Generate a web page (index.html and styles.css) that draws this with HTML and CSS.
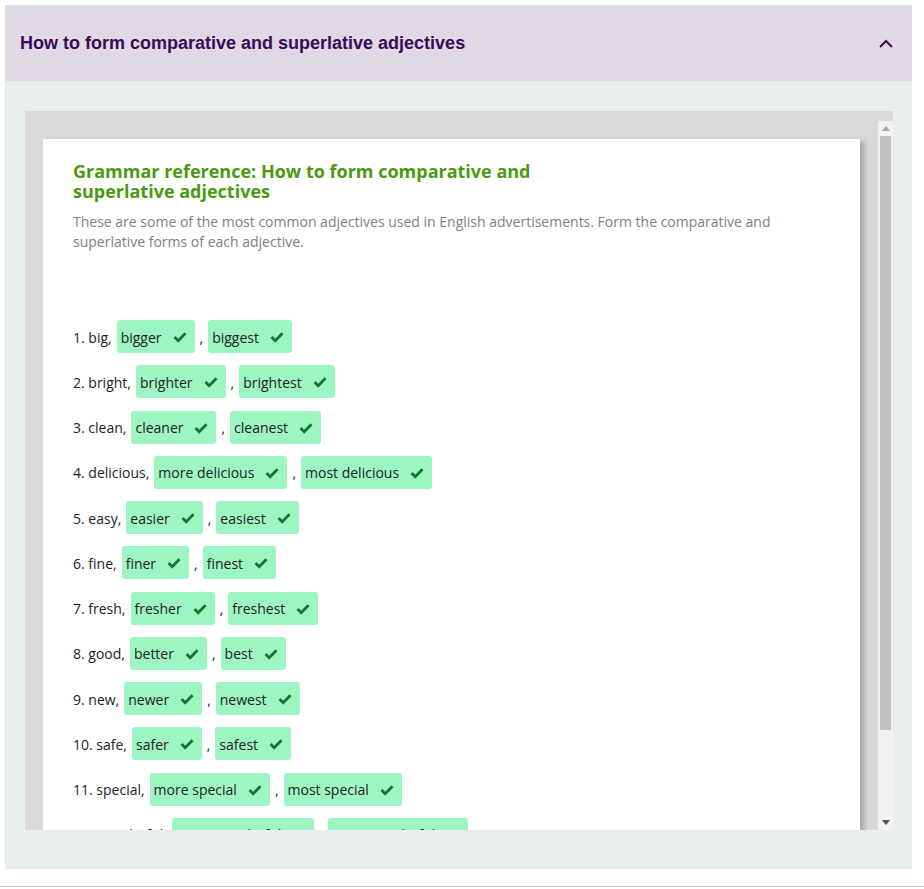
FILE: index.html
```html
<!DOCTYPE html>
<html lang="en">
<head>
<meta charset="utf-8">
<title>How to form comparative and superlative adjectives</title>
<link rel="stylesheet" href="styles.css">
</head>
<body>
<div class="page">
  <section class="accordion">
    <div class="acc-header">
      <h2 class="acc-title">How to form comparative and superlative adjectives</h2>
      <svg class="chevron" width="14" height="9" viewBox="0 0 14 9"><path d="M1 8 L7 2 L13 8" fill="none" stroke="#3b0a57" stroke-width="2"/></svg>
    </div>
    <div class="acc-body">
      <div class="frame">
        <div class="viewport">
          <div class="scroller">
            <div class="card">
              <h3 class="card-title">Grammar reference: How to form comparative and superlative adjectives</h3>
              <p class="desc">These are some of the most common adjectives used in English advertisements. Form the comparative and superlative forms of each adjective.</p>
              <div class="list">
                <div class="row"><span>1. big,</span><span class="chip">bigger<svg class="ck" viewBox="0 0 14 12"><path d="M1.5 6 L5.2 9.7 L12.5 2.2"/></svg></span><span>,</span><span class="chip">biggest<svg class="ck" viewBox="0 0 14 12"><path d="M1.5 6 L5.2 9.7 L12.5 2.2"/></svg></span></div>
                <div class="row"><span>2. bright,</span><span class="chip">brighter<svg class="ck" viewBox="0 0 14 12"><path d="M1.5 6 L5.2 9.7 L12.5 2.2"/></svg></span><span>,</span><span class="chip">brightest<svg class="ck" viewBox="0 0 14 12"><path d="M1.5 6 L5.2 9.7 L12.5 2.2"/></svg></span></div>
                <div class="row"><span>3. clean,</span><span class="chip">cleaner<svg class="ck" viewBox="0 0 14 12"><path d="M1.5 6 L5.2 9.7 L12.5 2.2"/></svg></span><span>,</span><span class="chip">cleanest<svg class="ck" viewBox="0 0 14 12"><path d="M1.5 6 L5.2 9.7 L12.5 2.2"/></svg></span></div>
                <div class="row"><span>4. delicious,</span><span class="chip">more delicious<svg class="ck" viewBox="0 0 14 12"><path d="M1.5 6 L5.2 9.7 L12.5 2.2"/></svg></span><span>,</span><span class="chip">most delicious<svg class="ck" viewBox="0 0 14 12"><path d="M1.5 6 L5.2 9.7 L12.5 2.2"/></svg></span></div>
                <div class="row"><span>5. easy,</span><span class="chip">easier<svg class="ck" viewBox="0 0 14 12"><path d="M1.5 6 L5.2 9.7 L12.5 2.2"/></svg></span><span>,</span><span class="chip">easiest<svg class="ck" viewBox="0 0 14 12"><path d="M1.5 6 L5.2 9.7 L12.5 2.2"/></svg></span></div>
                <div class="row"><span>6. fine,</span><span class="chip">finer<svg class="ck" viewBox="0 0 14 12"><path d="M1.5 6 L5.2 9.7 L12.5 2.2"/></svg></span><span>,</span><span class="chip">finest<svg class="ck" viewBox="0 0 14 12"><path d="M1.5 6 L5.2 9.7 L12.5 2.2"/></svg></span></div>
                <div class="row"><span>7. fresh,</span><span class="chip">fresher<svg class="ck" viewBox="0 0 14 12"><path d="M1.5 6 L5.2 9.7 L12.5 2.2"/></svg></span><span>,</span><span class="chip">freshest<svg class="ck" viewBox="0 0 14 12"><path d="M1.5 6 L5.2 9.7 L12.5 2.2"/></svg></span></div>
                <div class="row"><span>8. good,</span><span class="chip">better<svg class="ck" viewBox="0 0 14 12"><path d="M1.5 6 L5.2 9.7 L12.5 2.2"/></svg></span><span>,</span><span class="chip">best<svg class="ck" viewBox="0 0 14 12"><path d="M1.5 6 L5.2 9.7 L12.5 2.2"/></svg></span></div>
                <div class="row"><span>9. new,</span><span class="chip">newer<svg class="ck" viewBox="0 0 14 12"><path d="M1.5 6 L5.2 9.7 L12.5 2.2"/></svg></span><span>,</span><span class="chip">newest<svg class="ck" viewBox="0 0 14 12"><path d="M1.5 6 L5.2 9.7 L12.5 2.2"/></svg></span></div>
                <div class="row"><span>10. safe,</span><span class="chip">safer<svg class="ck" viewBox="0 0 14 12"><path d="M1.5 6 L5.2 9.7 L12.5 2.2"/></svg></span><span>,</span><span class="chip">safest<svg class="ck" viewBox="0 0 14 12"><path d="M1.5 6 L5.2 9.7 L12.5 2.2"/></svg></span></div>
                <div class="row"><span>11. special,</span><span class="chip">more special<svg class="ck" viewBox="0 0 14 12"><path d="M1.5 6 L5.2 9.7 L12.5 2.2"/></svg></span><span>,</span><span class="chip">most special<svg class="ck" viewBox="0 0 14 12"><path d="M1.5 6 L5.2 9.7 L12.5 2.2"/></svg></span></div>
                <div class="row"><span>12. wonderful,</span><span class="chip">more wonderful<svg class="ck" viewBox="0 0 14 12"><path d="M1.5 6 L5.2 9.7 L12.5 2.2"/></svg></span><span>,</span><span class="chip">most wonderful<svg class="ck" viewBox="0 0 14 12"><path d="M1.5 6 L5.2 9.7 L12.5 2.2"/></svg></span></div>
              </div>
            </div>
          </div>
          <div class="scrollbar" aria-hidden="true">
            <div class="sb-btn"><svg width="8" height="5" viewBox="0 0 8 5"><path d="M0 5 L4 0 L8 5 Z" fill="#a3a3a3"/></svg></div>
            <div class="sb-track"><div class="sb-thumb"></div></div>
            <div class="sb-btn"><svg width="8" height="5" viewBox="0 0 8 5"><path d="M0 0 L8 0 L4 5 Z" fill="#505050"/></svg></div>
          </div>
        </div>
      </div>
    </div>
  </section>
</div>
</body>
</html>
```
FILE: styles.css
```css
* { box-sizing: border-box; }
html, body { margin: 0; padding: 0; background: #fff; }
.page {
  padding: 5px 12px 17px 5px;
  border-bottom: 1px solid #c8c8c8;
}
.accordion { width: 907px; }
.acc-header {
  height: 76px;
  background: #e1d8e6;
  display: flex;
  align-items: center;
  justify-content: space-between;
  padding: 0 19px 0 15px;
}
.acc-title {
  margin: 0;
  font-family: "Liberation Sans", Arial, sans-serif;
  font-weight: bold;
  font-size: 18px;
  color: #3b0a57;
}
.chevron { display: block; margin-top: 1px; }
.acc-body {
  background: #e8eeee;
  padding: 30px 19px 39px 20px;
}
.frame {
  background: #d9d9d9;
  padding-top: 10px;
}
.viewport {
  display: flex;
  height: 709px;
}
.scroller {
  flex: 1;
  min-width: 0;
  overflow: hidden;
  padding: 18px;
}
.scrollbar {
  width: 15px;
  flex: none;
  display: flex;
  flex-direction: column;
  background: #f1f1f1;
}
.sb-btn {
  height: 15px;
  display: flex;
  align-items: center;
  justify-content: center;
}
.sb-btn svg { display: block; }
.sb-track {
  flex: 1;
  padding: 0 2px;
}
.sb-thumb {
  height: 594px;
  background: #c1c1c1;
}
.card {
  background: #fff;
  padding: 22px 30px 62px 30px;
  box-shadow: 4px 2px 5px rgba(0,0,0,0.25);
  font-family: "Open Sans", sans-serif;
}
.card-title {
  margin: 0;
  max-width: 500px;
  font-size: 18px;
  line-height: 20px;
  font-weight: bold;
  color: #4a9a0f;
}
.desc {
  margin: 11px 0 0;
  font-size: 14px;
  line-height: 20px;
  color: #808080;
}
.list {
  margin-top: 68px;
  display: flex;
  flex-direction: column;
  gap: 12.25px;
}
.row {
  display: flex;
  align-items: center;
  gap: 5px;
  height: 33px;
  font-size: 14px;
  color: #222;
}
.row > span { padding-top: 1px; }
.chip {
  display: flex;
  align-items: center;
  gap: 11px;
  height: 33px;
  padding: 1px 8px 0 4px;
  background: #9df5c2;
  border-radius: 3px;
}
.ck {
  width: 14px;
  height: 12px;
  fill: none;
  stroke: #0b7a2c;
  stroke-width: 2.8;
}
```
